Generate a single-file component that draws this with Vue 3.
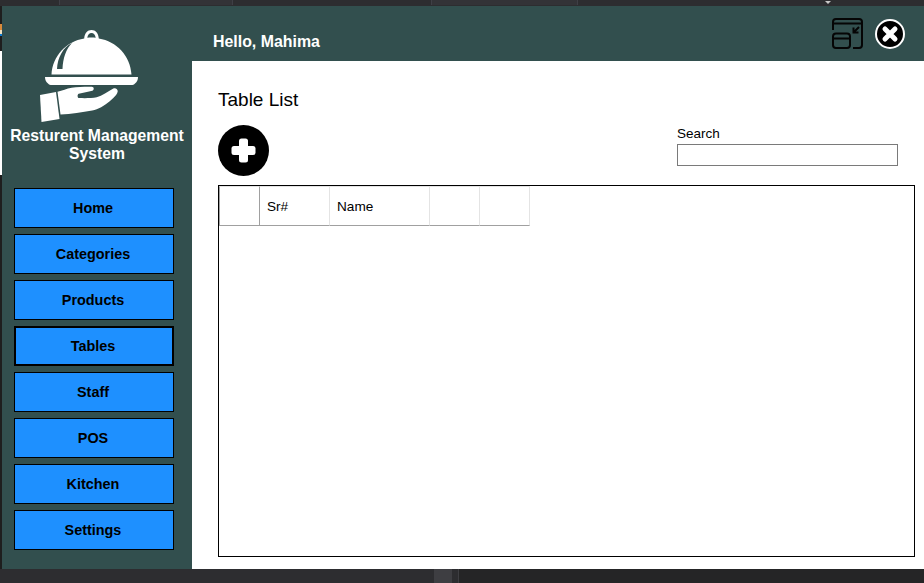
<script setup>
const nav = ['Home', 'Categories', 'Products', 'Tables', 'Staff', 'POS', 'Kitchen', 'Settings']
const cols = [
  { label: '', w: 41, cls: 'corner' },
  { label: 'Sr#', w: 70 },
  { label: 'Name', w: 100 },
  { label: '', w: 50 },
  { label: '', w: 50 }
]
</script>

<template>
  <div class="page">
    <div class="top-strip">
      <span class="tab t1"></span><span class="tab t2"></span><span class="tab t3"></span><span class="tab t4"></span>
      <span class="caret"></span>
    </div>
    <div class="window">
      <div class="edge"></div>
      <aside class="sidebar">
        <svg class="logo" viewBox="0 0 110 100" width="110" height="100">
          <g fill="#fff">
            <path fill-rule="evenodd" d="M49.200 13.400C49.500 8.500 52.500 5 56.500 5s7 3.500 7.300 8.400C81.500 16 95.500 31 96.500 49.500h-80C17.500 31 31.500 16 49.200 13.400ZM52.300 12.800c2.800-.4 5.600-.4 8.400 0C60.300 10 58.700 8 56.500 8s-3.800 2-4.200 4.800Z"/>
            <path d="M10 52h93c0 3-1 5-3 6.500-1 1-2 1.500-4 1.500H17c-2 0-3-.5-4-1.500C11 57 10 55 10 52Z"/>
            <path d="M5 70l16-3 3.500 27-18 3Z"/>
            <path d="M22.500 66.700c5-1 9-3.200 14.200-4 6-.8 15-1.200 20-1 2.500.1 2.800 3.300.5 4-4 1-9 1.800-13.500 3-1.500.5-1.500 4.300.4 4.400 6 .2 12.500.2 17.600-.8 5.500-1.500 11-5.500 16.600-8.700 2-1 4.700.3 4.400 3-.3 2.500-2.500 4.800-4.400 6.300-5 4.800-10.500 8.800-16.600 11.400-1.500.7-3 1-4.500 1.200-10 1.500-21 3.500-31.700 4Z"/>
          </g>
          <path d="M37 18C28 22 22.500 33 22 44h5.500C28 33 31 24 37 18Z" fill="#324f4e"/>
        </svg>
        <div class="brand">Resturent Management<br>System</div>
        <nav class="nav">
          <button v-for="n in nav" :key="n" class="nav-btn" :class="{ active: n === 'Tables' }">{{ n }}</button>
        </nav>
      </aside>
      <main class="main">
        <header class="header">
          <span class="hello">Hello, Mahima</span>
          <div class="actions">
            <svg width="32" height="32" viewBox="0 0 32 32" fill="none" stroke="#050505" stroke-width="2">
              <path d="M1 12V4a3 3 0 0 1 3-3h23a3 3 0 0 1 3 3v23a3 3 0 0 1-3 3h-6"/>
              <path d="M1 5.500h29"/>
              <rect x="1" y="15.500" width="17" height="14.500" rx="3"/>
              <path d="M1 20.500h17"/>
              <path d="M27 9l-5.500 5.500M21.500 9.500v5h5"/>
            </svg>
            <svg class="close" width="30" height="30" viewBox="0 0 30 30">
              <circle cx="15" cy="15" r="14" fill="#000" stroke="#fff" stroke-width="2"/>
              <path d="M10 10l10 10M20 10l-10 10" stroke="#fff" stroke-width="5" stroke-linecap="round"/>
            </svg>
          </div>
        </header>
        <section class="content">
          <h1 class="title">Table List</h1>
          <div class="toolbar">
            <svg class="add" width="51" height="51" viewBox="0 0 51 51">
              <circle cx="25.500" cy="25.500" r="25.500" fill="#000"/>
              <rect x="13.500" y="21" width="24" height="9" rx="2.500" fill="#fff"/>
              <rect x="21" y="13.500" width="9" height="24" rx="2.500" fill="#fff"/>
            </svg>
            <div class="search">
              <label class="search-label">Search</label>
              <input class="search-input" type="text">
            </div>
          </div>
          <div class="grid">
            <div class="grid-head">
              <div v-for="(c, i) in cols" :key="i" class="cell" :class="c.cls" :style="{ width: c.w + 'px' }">{{ c.label }}</div>
            </div>
          </div>
        </section>
      </main>
    </div>
    <div class="bottom-strip">
      <div class="b-left"></div>
      <div class="b-thumb"></div>
      <div class="b-gap"></div>
      <div class="b-right"></div>
    </div>
  </div>
</template>

<style scoped>
.page {
  width: 924px;
  height: 583px;
  display: flex;
  flex-direction: column;
  overflow: hidden;
  background: #2d2d30;
  font-family: "Liberation Sans", Arial, sans-serif;
  color: #000;
}
.top-strip {
  height: 6px;
  flex: none;
  display: flex;
  background: #2d2d30;
  position: relative;
}
.tab { height: 5px; box-sizing: border-box; border-right: 1px solid #3f3f46; }
.t1 { width: 60px; }
.t2 { width: 173px; background: #333337; }
.t3 { width: 199px; }
.t4 { width: 146px; background: #333337; }
.caret {
  position: absolute;
  left: 825px;
  top: 1px;
  border-left: 3px solid transparent;
  border-right: 3px solid transparent;
  border-top: 3px solid #c8c8c8;
}
.window {
  flex: 1;
  min-height: 0;
  display: flex;
}
.edge {
  width: 2px;
  flex: none;
  background: linear-gradient(#1e1e1e 0 18px, #d98a3a 18px 24px, #f0e0c0 24px 28px, #0a7ad1 28px 30px, #1e1e1e 30px 45px, #fff 45px 169px, #1e1e1e 169px);
}
.sidebar {
  width: 190px;
  flex: none;
  background: #324f4e;
  display: flex;
  flex-direction: column;
  align-items: center;
}
.logo { margin-top: 19px; margin-left: -14px; }
.brand {
  color: #fff;
  font-weight: 700;
  font-size: 15.700px;
  line-height: 18px;
  text-align: center;
  margin-top: 2px;
  white-space: nowrap;
}
.nav {
  margin-top: 25px;
  display: flex;
  flex-direction: column;
  gap: 6px;
  margin-left: -6px;
}
.nav-btn {
  width: 160px;
  height: 40px;
  box-sizing: border-box;
  padding: 0 2px 0 0;
  background: #1e90ff;
  border: 1px solid #000;
  font: 700 14.400px "Liberation Sans", Arial, sans-serif;
  color: #000;
}
.nav-btn.active { border-width: 2px; }
.main {
  flex: 1;
  min-width: 0;
  display: flex;
  flex-direction: column;
}
.header {
  height: 55px;
  flex: none;
  background: #324f4e;
  display: flex;
  align-items: flex-start;
  justify-content: space-between;
}
.hello {
  color: #fff;
  font-weight: 700;
  font-size: 15.900px;
  margin: 27px 0 0 21px;
  line-height: 17px;
}
.actions {
  display: flex;
  align-items: center;
  gap: 11px;
  margin: 12px 19px 0 0;
}
.content {
  flex: 1;
  min-height: 0;
  background: #fff;
  padding: 0 9px 12px 26px;
  display: flex;
  flex-direction: column;
}
.title {
  margin: 28px 0 0;
  font-weight: 400;
  font-size: 19px;
  line-height: 21px;
}
.toolbar {
  margin-top: 15px;
  height: 60px;
  flex: none;
  display: flex;
  justify-content: space-between;
  align-items: flex-start;
}
.search {
  width: 221px;
  margin-right: 17px;
  display: flex;
  flex-direction: column;
}
.search-label { font-size: 13.500px; line-height: 16px; margin-top: 1px; }
.search-input {
  height: 22px;
  box-sizing: border-box;
  margin-top: 2px;
  border: 1px solid #7a7a7a;
  background: #fff;
  padding: 0;
  outline: none;
}
.grid {
  flex: 1;
  min-height: 0;
  box-sizing: border-box;
  border: 1px solid #000;
}
.grid-head { display: flex; height: 40px; }
.cell {
  box-sizing: border-box;
  height: 40px;
  padding-left: 7px;
  display: flex;
  align-items: center;
  font-size: 13.600px;
  border-top: 1px solid #e4e4e4;
  border-right: 1px solid #e4e4e4;
  border-bottom: 1px solid #a0a0a0;
}
.cell.corner { border-left: 1px solid #a0a0a0; border-right: 1px solid #a0a0a0; }
.bottom-strip { height: 14px; flex: none; display: flex; }
.b-left { width: 434px; flex: none; background: #2d2d30; }
.b-thumb { width: 18px; flex: none; background: #3e3e42; }
.b-gap { width: 7px; flex: none; box-sizing: border-box; background: #2d2d30; border-right: 1px solid #3e3e42; }
.b-right { flex: 1; background: #252526; }
</style>
<style>
html, body { margin: 0; background: #2d2d30; }
</style>
